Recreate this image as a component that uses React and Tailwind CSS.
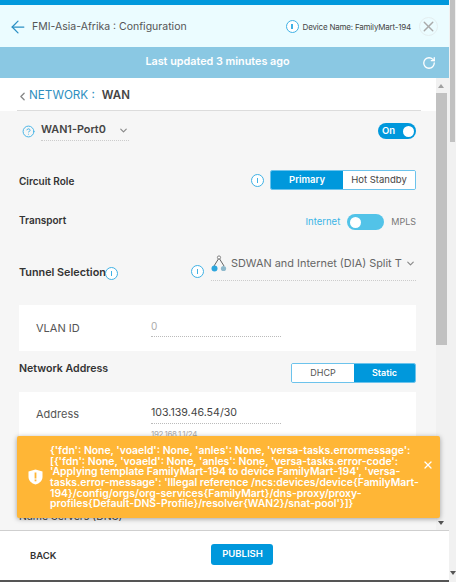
import { ChevronLeft, ChevronDown, ArrowLeft, X, RotateCw, HelpCircle } from 'lucide-react';

const InfoIcon = ({ className = '' }) => (
  <span className={`flex h-[13px] w-[13px] shrink-0 items-center justify-center rounded-full border-[1.5px] border-[#3fb1e5] bg-white ${className}`}>
    <span className="h-[5px] w-[1.5px] bg-[#3fb1e5]" />
  </span>
);

const TunnelIcon = () => (
  <svg width="16" height="18" viewBox="0 0 16 18" className="shrink-0">
    <path d="M8 3 L3 11 M8 3 L13 11" stroke="#666" strokeWidth="1" fill="none" />
    <circle cx="8" cy="2.5" r="1.6" fill="#fff" stroke="#666" strokeWidth="0.8" />
    <circle cx="3.5" cy="13.5" r="3" fill="#2ea6dd" />
    <circle cx="12.5" cy="13.5" r="2.6" fill="#8fb9cc" />
  </svg>
);

const ShieldIcon = () => (
  <svg width="15" height="16" viewBox="0 0 15 16" className="shrink-0">
    <path d="M7.5 0.5 L14.5 2.5 V8 C14.5 11.5 11.5 14.5 7.5 15.5 C3.5 14.5 0.5 11.5 0.5 8 V2.5 Z" fill="#fff" />
    <rect x="6.6" y="3.5" width="1.8" height="6" fill="#ffb636" />
    <rect x="6.6" y="10.5" width="1.8" height="1.8" fill="#ffb636" />
  </svg>
);

export default function App() {
  return (
    <div className="relative flex h-[582px] w-[456px] overflow-hidden bg-[#f6f6f6] font-['Inter',sans-serif] text-[#333]">
      <div className="flex h-full w-[449px] flex-col">
        <div className="h-[5px] shrink-0 bg-[#0098dc]" />
        <div className="flex h-[42px] shrink-0 items-center bg-[#ebfcff] pl-[8px] pr-[11px] pt-[1px]">
          <ArrowLeft size={20} strokeWidth={1.5} className="text-[#2a8fc4]" />
          <span className="ml-[4px] text-[10.5px] text-[#555]">FMI-Asia-Afrika : Configuration</span>
          <span className="ml-auto flex items-center">
            <InfoIcon className="bg-transparent" />
            <span className="ml-[4px] text-[8px] tracking-[-0.2px] text-[#444]">Device Name: FamilyMart-194</span>
            <span className="ml-[8px] flex h-[19px] w-[19px] items-center justify-center rounded-full border border-[#e4eef0]">
              <X size={17} strokeWidth={2} className="text-[#aaa]" />
            </span>
          </span>
        </div>
        <div className="relative flex h-[31px] shrink-0 items-center justify-center bg-[#8ac8e3] pr-[14px]">
          <span className="text-[10.8px] font-semibold text-white">Last updated 3 minutes ago</span>
          <RotateCw size={14} strokeWidth={2.25} className="absolute right-[13px] text-white" />
        </div>

        <div className="flex min-h-0 flex-1">
          <div className="flex min-w-0 flex-1 flex-col">
            <div className="shrink-0 bg-white pl-[17px] pr-[15px]">
              <div className="flex h-[33px] items-center border-b border-[#dcdcdc] pt-[4px]">
                <ChevronLeft size={13} strokeWidth={2.5} className="-ml-[1px] text-[#888]" />
                <span className="text-[11.7px] text-[#2f8fc0]">NETWORK :</span>
                <span className="ml-[7px] text-[11.5px] font-semibold text-[#444]">WAN</span>
              </div>
            </div>

            <div className="min-h-0 flex-1 overflow-hidden pl-[19px] pr-[20px]">
              <div className="flex h-[33px] items-center justify-between pt-[7px]">
                <div className="flex items-center">
                  <HelpCircle size={13} strokeWidth={1.75} className="ml-[3px] mr-[6px] text-[#3fb1e5]" />
                  <span className="flex h-[20px] w-[88px] items-center justify-between border-b border-dotted border-[#ccc] text-[10.8px] font-semibold text-[#444]">
                    WAN1-Port0
                    <ChevronDown size={11} strokeWidth={2.5} className="text-[#888]" />
                  </span>
                </div>
                <span className="flex h-[16px] w-[38px] items-center justify-between rounded-full bg-[#0098dc] pl-[4px] pr-[2px] text-[9.5px] font-semibold text-white">
                  On
                  <span className="h-[11px] w-[11px] rounded-full bg-white" />
                </span>
              </div>

              <div className="mt-[26px] flex h-[20px] items-center justify-between">
                <span className="mt-[2px] text-[10px] font-semibold text-[#333]">Circuit Role</span>
                <div className="flex items-center">
                  <InfoIcon className="mr-[6px]" />
                  <div className="flex h-[20px] w-[146px] overflow-hidden rounded-[2px] border border-[#6cc3ec] text-[9.5px]">
                    <span className="flex w-[72px] items-center justify-center bg-[#0098dc] font-semibold text-white">Primary</span>
                    <span className="flex flex-1 items-center justify-center bg-white text-[#444]">Hot Standby</span>
                  </div>
                </div>
              </div>

              <div className="mt-[24px] flex h-[16px] items-center justify-between">
                <span className="-mt-[4px] text-[10px] font-semibold text-[#333]">Transport</span>
                <div className="flex items-center">
                  <span className="text-[9.5px] text-[#3ab5e6]">Internet</span>
                  <span className="mx-[7px] flex h-[16px] w-[37px] items-center rounded-full bg-[#52c3e8] pl-[3px]">
                    <span className="h-[11px] w-[11px] rounded-full bg-white" />
                  </span>
                  <span className="text-[9px] text-[#777]">MPLS</span>
                </div>
              </div>

              <div className="mt-[21px] flex h-[30px] items-start justify-between">
                <div className="mt-[14px] flex items-center">
                  <span className="text-[10.8px] font-semibold text-[#333]">Tunnel Selection</span>
                  <InfoIcon className="-ml-[1px]" />
                </div>
                <div className="flex items-start">
                  <InfoIcon className="mr-[7px] mt-[14px]" />
                  <div className="flex h-[30px] w-[205px] items-center overflow-hidden whitespace-nowrap border-b border-dotted border-[#ccc] pb-[4px]">
                    <TunnelIcon />
                    <span className="ml-[4px] w-[173px] overflow-hidden text-[10.9px] text-[#666]">SDWAN and Internet (DIA) Split T</span>
                    <ChevronDown size={11} strokeWidth={2.5} className="ml-auto shrink-0 text-[#888]" />
                  </div>
                </div>
              </div>

              <div className="mt-[24px] flex h-[46px] items-center bg-white pl-[17px]">
                <span className="w-[115px] text-[11px] text-[#555]">VLAN ID</span>
                <span className="w-[130px] border-b border-dotted border-[#bbb] pb-[2px] text-[10px] text-[#aaa]">0</span>
              </div>

              <div className="mt-[12px] flex h-[20px] items-center justify-between">
                <span className="-mt-[9px] text-[10.6px] font-semibold text-[#333]">Network Address</span>
                <div className="flex h-[20px] w-[125px] overflow-hidden rounded-[2px] border border-[#6cc3ec] text-[9px]">
                  <span className="flex w-[62px] items-center justify-center bg-white text-[#555]">DHCP</span>
                  <span className="flex flex-1 items-center justify-center bg-[#0098dc] font-semibold text-white">Static</span>
                </div>
              </div>

              <div className="mt-[9px] h-[120px] bg-white pl-[17px] pt-[13px]">
                <div className="flex items-center">
                  <span className="w-[115px] text-[11px] text-[#555]">Address</span>
                  <span className="w-[130px] border-b border-dotted border-[#bbb] pb-[2px] text-[10.6px] text-[#444]">103.139.46.54/30</span>
                </div>
                <div className="ml-[115px] mt-[4px] text-[8px] tracking-[-0.3px] text-[#aaa]">192.168.1.1/24</div>
              </div>

              <div className="mt-[-3px] text-[10.5px] text-[#444]">Name Servers (DNS)</div>
            </div>
          </div>

          {/* inner scrollbar */}
          <div className="flex w-[13px] shrink-0 flex-col items-start bg-[#f1f1f1] pt-[6px]">
            <span className="ml-[2px] h-0 w-0 border-x-[3.5px] border-b-[4px] border-x-transparent border-b-[#a0a0a0]" />
            <span className="mt-[5px] h-[252px] w-[11px] bg-[#c1c1c1]" />
            <span className="ml-[2px] mt-auto mb-[5px] h-0 w-0 border-x-[3.5px] border-t-[4px] border-x-transparent border-t-[#555]" />
          </div>
        </div>

        <div className="flex h-[50px] shrink-0 items-start border-t border-[#cfcfcf] bg-white pl-[30px]">
          <span className="mt-[18px] text-[9.5px] font-semibold text-[#333]">BACK</span>
          <span className="ml-[155px] mt-[13px] flex h-[21px] w-[62px] items-center justify-center rounded-[3px] bg-[#0098dc] text-[9.5px] font-semibold text-white">PUBLISH</span>
        </div>
        <div className="h-[2px] shrink-0 bg-[#555]" />
      </div>

      {/* outer scrollbar */}
      <div className="flex w-[7px] shrink-0 flex-col bg-[#f1f1f1] pl-[1px]">
        <span className="h-[142px] w-[5px] bg-[#c1c1c1]" />
        <span className="mb-[7px] mt-auto h-0 w-0 border-x-[3px] border-t-[4px] border-x-transparent border-t-[#555]" />
      </div>

      {/* error toast */}
      <div className="absolute left-[17px] top-[436px] flex h-[82px] w-[423px] items-center rounded-[2px] bg-[#ffb636] pl-[11px] pr-[6px] text-white shadow-[0_1px_5px_rgba(0,0,0,0.35)]">
        <ShieldIcon />
        <p className="ml-[7px] mt-[2px] w-[372px] text-[10.4px] font-semibold leading-[10.6px]">
          {"{'fdn': None, 'voaeld': None, 'anles': None, 'versa-tasks.errormessage': [{'fdn': None, 'voaeld': None, 'anles': None, 'versa-tasks.error-code': 'Applying template FamilyMart-194 to device FamilyMart-194', 'versa-tasks.error-message': 'Illegal reference /ncs:devices/device{FamilyMart-194}/config/orgs/org-services{FamilyMart}/dns-proxy/proxy-profiles{Default-DNS-Profile}/resolver{WAN2}/snat-pool'}]}"}
        </p>
        <X size={12} strokeWidth={2.5} className="mb-[24px] ml-auto shrink-0 text-white" />
      </div>
    </div>
  );
}
